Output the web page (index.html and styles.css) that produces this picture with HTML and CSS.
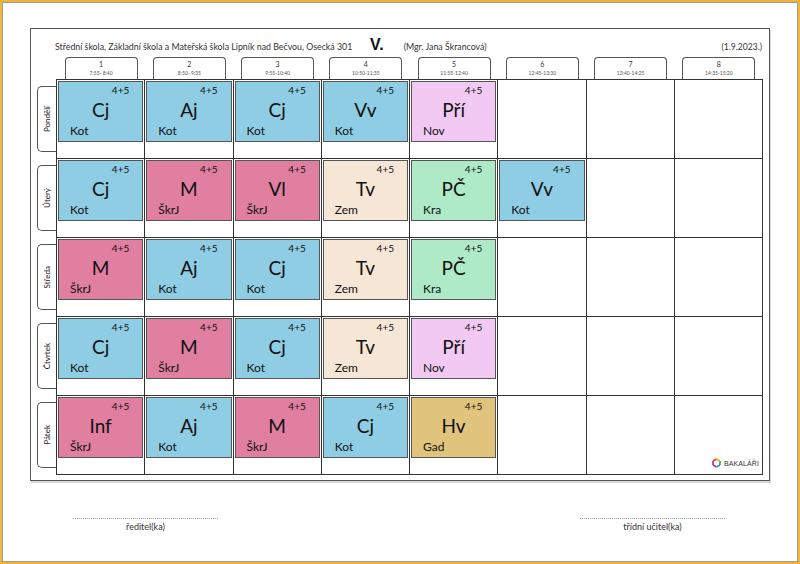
FILE: index.html
```html
<!DOCTYPE html>
<html lang="cs">
<head>
<meta charset="utf-8">
<title>Rozvrh V.</title>
<link rel="stylesheet" href="styles.css">
</head>
<body>
<div class="page">
  <div class="frame">
    <div class="title">
      <span class="school">Střední škola, Základní škola a Mateřská škola Lipník nad Bečvou, Osecká 301</span>
      <span class="cls">V.</span>
      <span class="teacher">(Mgr. Jana Škrancová)</span>
      <span class="date">(1.9.2023.)</span>
    </div>
    <div class="periods">
      <div class="period"><div class="pn">1</div><div class="pt">7:55- 8:40</div></div>
      <div class="period"><div class="pn">2</div><div class="pt">8:50- 9:35</div></div>
      <div class="period"><div class="pn">3</div><div class="pt">9:55-10:40</div></div>
      <div class="period"><div class="pn">4</div><div class="pt">10:50-11:35</div></div>
      <div class="period"><div class="pn">5</div><div class="pt">11:55-12:40</div></div>
      <div class="period"><div class="pn">6</div><div class="pt">12:45-13:30</div></div>
      <div class="period"><div class="pn">7</div><div class="pt">13:40-14:25</div></div>
      <div class="period"><div class="pn">8</div><div class="pt">14:35-15:20</div></div>
    </div>
    <div class="table">
      <div class="days">
        <div class="day"><div class="daytab"><span>Pondělí</span></div></div>
        <div class="day"><div class="daytab"><span>Úterý</span></div></div>
        <div class="day"><div class="daytab"><span>Středa</span></div></div>
        <div class="day"><div class="daytab"><span>Čtvrtek</span></div></div>
        <div class="day"><div class="daytab"><span>Pátek</span></div></div>
      </div>
      <div class="grid">
        <!-- Pondělí -->
        <div class="cell"><div class="card blue"><div class="hrs">4+5</div><div class="subj">Cj</div><div class="teach">Kot</div></div></div>
        <div class="cell"><div class="card blue"><div class="hrs">4+5</div><div class="subj">Aj</div><div class="teach">Kot</div></div></div>
        <div class="cell"><div class="card blue"><div class="hrs">4+5</div><div class="subj">Cj</div><div class="teach">Kot</div></div></div>
        <div class="cell"><div class="card blue"><div class="hrs">4+5</div><div class="subj">Vv</div><div class="teach">Kot</div></div></div>
        <div class="cell"><div class="card lav"><div class="hrs">4+5</div><div class="subj">Pří</div><div class="teach">Nov</div></div></div>
        <div class="cell"></div>
        <div class="cell"></div>
        <div class="cell"></div>
        <!-- Úterý -->
        <div class="cell"><div class="card blue"><div class="hrs">4+5</div><div class="subj">Cj</div><div class="teach">Kot</div></div></div>
        <div class="cell"><div class="card pink"><div class="hrs">4+5</div><div class="subj">M</div><div class="teach">ŠkrJ</div></div></div>
        <div class="cell"><div class="card pink"><div class="hrs">4+5</div><div class="subj">Vl</div><div class="teach">ŠkrJ</div></div></div>
        <div class="cell"><div class="card peach"><div class="hrs">4+5</div><div class="subj">Tv</div><div class="teach">Zem</div></div></div>
        <div class="cell"><div class="card green"><div class="hrs">4+5</div><div class="subj">PČ</div><div class="teach">Kra</div></div></div>
        <div class="cell"><div class="card blue"><div class="hrs">4+5</div><div class="subj">Vv</div><div class="teach">Kot</div></div></div>
        <div class="cell"></div>
        <div class="cell"></div>
        <!-- Středa -->
        <div class="cell"><div class="card pink"><div class="hrs">4+5</div><div class="subj">M</div><div class="teach">ŠkrJ</div></div></div>
        <div class="cell"><div class="card blue"><div class="hrs">4+5</div><div class="subj">Aj</div><div class="teach">Kot</div></div></div>
        <div class="cell"><div class="card blue"><div class="hrs">4+5</div><div class="subj">Cj</div><div class="teach">Kot</div></div></div>
        <div class="cell"><div class="card peach"><div class="hrs">4+5</div><div class="subj">Tv</div><div class="teach">Zem</div></div></div>
        <div class="cell"><div class="card green"><div class="hrs">4+5</div><div class="subj">PČ</div><div class="teach">Kra</div></div></div>
        <div class="cell"></div>
        <div class="cell"></div>
        <div class="cell"></div>
        <!-- Čtvrtek -->
        <div class="cell"><div class="card blue"><div class="hrs">4+5</div><div class="subj">Cj</div><div class="teach">Kot</div></div></div>
        <div class="cell"><div class="card pink"><div class="hrs">4+5</div><div class="subj">M</div><div class="teach">ŠkrJ</div></div></div>
        <div class="cell"><div class="card blue"><div class="hrs">4+5</div><div class="subj">Cj</div><div class="teach">Kot</div></div></div>
        <div class="cell"><div class="card peach"><div class="hrs">4+5</div><div class="subj">Tv</div><div class="teach">Zem</div></div></div>
        <div class="cell"><div class="card lav"><div class="hrs">4+5</div><div class="subj">Pří</div><div class="teach">Nov</div></div></div>
        <div class="cell"></div>
        <div class="cell"></div>
        <div class="cell"></div>
        <!-- Pátek -->
        <div class="cell"><div class="card pink"><div class="hrs">4+5</div><div class="subj">Inf</div><div class="teach">ŠkrJ</div></div></div>
        <div class="cell"><div class="card blue"><div class="hrs">4+5</div><div class="subj">Aj</div><div class="teach">Kot</div></div></div>
        <div class="cell"><div class="card pink"><div class="hrs">4+5</div><div class="subj">M</div><div class="teach">ŠkrJ</div></div></div>
        <div class="cell"><div class="card blue"><div class="hrs">4+5</div><div class="subj">Cj</div><div class="teach">Kot</div></div></div>
        <div class="cell"><div class="card gold"><div class="hrs">4+5</div><div class="subj">Hv</div><div class="teach">Gad</div></div></div>
        <div class="cell"></div>
        <div class="cell"></div>
        <div class="cell">
          <div class="logo">
            <svg class="hex" width="9" height="10" viewBox="0 0 9 10">
              <path d="M4.5 1 L8 3" stroke="#f6a21c" stroke-width="1.8" fill="none"/>
              <path d="M8 3 L8 7" stroke="#3fb54a" stroke-width="1.8" fill="none"/>
              <path d="M8 7 L4.5 9" stroke="#2c8fd6" stroke-width="1.8" fill="none"/>
              <path d="M4.5 9 L1 7" stroke="#7b3fc4" stroke-width="1.8" fill="none"/>
              <path d="M1 7 L1 3" stroke="#e0307a" stroke-width="1.8" fill="none"/>
              <path d="M1 3 L4.5 1" stroke="#ee4030" stroke-width="1.8" fill="none"/>
            </svg>
            <span>BAKALÁŘI</span>
          </div>
        </div>
      </div>
    </div>
  </div>
  <div class="signs">
    <div class="sign">ředitel(ka)</div>
    <div class="sign">třídní učitel(ka)</div>
  </div>
</div>
</body>
</html>
```

FILE: styles.css
```css
html, body {
  margin: 0;
  padding: 0;
  background: #ffffff;
}

body {
  font-family: "Lato", "Open Sans", "Liberation Sans", sans-serif;
  color: #222;
}

.page {
  box-sizing: border-box;
  width: 800px;
  height: 564px;
  border: 2px solid #f0b436;
  box-shadow: inset 0 0 0 1px #9a9a9a, 0 0 0 1px #9a9a9a;
  padding: 26px 0 0 28px;
  overflow: hidden;
}

.frame {
  box-sizing: border-box;
  width: 740px;
  border: 1px solid #555;
  box-shadow: 1px 2px 0 #d8d8d8;
  padding: 0 6px 5px 0;
}

/* title line */
.title {
  display: flex;
  align-items: baseline;
  height: 28px;
  box-sizing: border-box;
  padding: 8px 0 0 24px;
  color: #333;
}

.school {
  font-size: 8.8px;
  width: 315px;
  white-space: nowrap;
}

.cls {
  font-family: "Liberation Sans", sans-serif;
  font-size: 16px;
  font-weight: bold;
  line-height: 15px;
  color: #111;
}

.teacher {
  font-size: 8.8px;
  margin-left: 20px;
}

.date {
  font-size: 8.6px;
  margin-left: auto;
  padding-right: 1px;
}

/* period header tabs */
.periods {
  display: grid;
  grid-template-columns: repeat(8, 1fr);
  margin-left: 25px;
  width: 707px;
  height: 22px;
  box-sizing: border-box;
  padding-left: 1px;
}

.period {
  justify-self: center;
  width: 73px;
  box-sizing: border-box;
  border: 1px solid #555;
  border-bottom: none;
  border-radius: 4px 4px 0 0;
  text-align: center;
  color: #333;
}

.pn {
  font-size: 7px;
  line-height: 10px;
  padding-top: 1px;
}

.pt {
  font-size: 5px;
  line-height: 8px;
  color: #555;
}

/* timetable body */
.table {
  display: flex;
}

.days {
  width: 25px;
  padding-top: 1px;
}

.day {
  height: 79px;
  box-sizing: border-box;
  padding: 6px 0 0 6px;
}

.daytab {
  box-sizing: border-box;
  width: 19px;
  height: 66px;
  border: 1px solid #555;
  border-right: none;
  border-radius: 5px 0 0 5px;
  display: flex;
  align-items: center;
  justify-content: center;
}

.daytab span {
  writing-mode: vertical-rl;
  transform: rotate(180deg);
  font-size: 8px;
  color: #222;
  white-space: nowrap;
}

.grid {
  display: grid;
  grid-template-columns: repeat(8, 1fr);
  grid-template-rows: repeat(5, 79px);
  width: 707px;
  box-sizing: border-box;
  border-top: 1px solid #333;
  border-left: 1px solid #333;
}

.cell {
  position: relative;
  box-sizing: border-box;
  border-right: 1px solid #333;
  border-bottom: 1px solid #333;
  padding: 1px;
}

.card {
  box-sizing: border-box;
  height: 61px;
  border: 1px solid #555;
  display: flex;
  flex-direction: column;
  color: #111;
}

.blue  { background: #8fcde4; }
.pink  { background: #e07fa0; }
.peach { background: #f6e6d6; }
.green { background: #aeeac8; }
.lav   { background: #f2c9f2; }
.gold  { background: #e1c47c; }

.hrs {
  font-size: 10px;
  line-height: 12px;
  text-align: right;
  padding: 2px 13px 0 0;
}

.subj {
  font-size: 19px;
  line-height: 22px;
  text-align: center;
  margin-top: 3px;
}

.teach {
  font-size: 12px;
  line-height: 14px;
  padding-left: 11px;
  margin-top: 3px;
}

.logo {
  position: absolute;
  right: 3px;
  bottom: 6px;
  display: flex;
  align-items: center;
  gap: 3px;
}

.logo span {
  font-family: "Liberation Sans", sans-serif;
  font-size: 7px;
  color: #333;
  letter-spacing: 0.1px;
}

.hex {
  display: block;
}

/* signatures */
.signs {
  display: flex;
  gap: 362px;
  margin: 37px 0 0 43px;
}

.sign {
  width: 145px;
  border-top: 1px dotted #9a9a9a;
  text-align: center;
  font-size: 9px;
  line-height: 11px;
  padding-top: 2px;
  color: #333;
}
```
